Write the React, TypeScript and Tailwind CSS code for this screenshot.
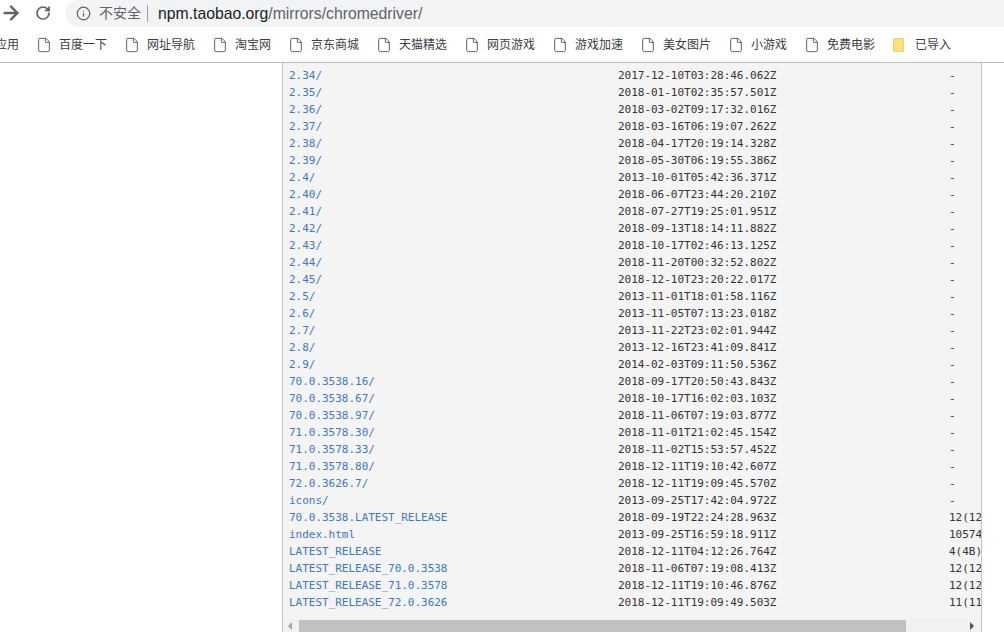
import { ArrowRight, RotateCw, Info, File } from 'lucide-react';

const bookmarks: [string, string][] = [
  ['百度一下', 'w-[88px]'],
  ['网址导航', 'w-[88px]'],
  ['淘宝网', 'w-[76px]'],
  ['京东商城', 'w-[88px]'],
  ['天猫精选', 'w-[88px]'],
  ['网页游戏', 'w-[88px]'],
  ['游戏加速', 'w-[88px]'],
  ['美女图片', 'w-[88px]'],
  ['小游戏', 'w-[76px]'],
  ['免费电影', 'w-[88px]'],
];

const rows = [
  ['2.34/', '2017-12-10T03:28:46.062Z', '-'],
  ['2.35/', '2018-01-10T02:35:57.501Z', '-'],
  ['2.36/', '2018-03-02T09:17:32.016Z', '-'],
  ['2.37/', '2018-03-16T06:19:07.262Z', '-'],
  ['2.38/', '2018-04-17T20:19:14.328Z', '-'],
  ['2.39/', '2018-05-30T06:19:55.386Z', '-'],
  ['2.4/', '2013-10-01T05:42:36.371Z', '-'],
  ['2.40/', '2018-06-07T23:44:20.210Z', '-'],
  ['2.41/', '2018-07-27T19:25:01.951Z', '-'],
  ['2.42/', '2018-09-13T18:14:11.882Z', '-'],
  ['2.43/', '2018-10-17T02:46:13.125Z', '-'],
  ['2.44/', '2018-11-20T00:32:52.802Z', '-'],
  ['2.45/', '2018-12-10T23:20:22.017Z', '-'],
  ['2.5/', '2013-11-01T18:01:58.116Z', '-'],
  ['2.6/', '2013-11-05T07:13:23.018Z', '-'],
  ['2.7/', '2013-11-22T23:02:01.944Z', '-'],
  ['2.8/', '2013-12-16T23:41:09.841Z', '-'],
  ['2.9/', '2014-02-03T09:11:50.536Z', '-'],
  ['70.0.3538.16/', '2018-09-17T20:50:43.843Z', '-'],
  ['70.0.3538.67/', '2018-10-17T16:02:03.103Z', '-'],
  ['70.0.3538.97/', '2018-11-06T07:19:03.877Z', '-'],
  ['71.0.3578.30/', '2018-11-01T21:02:45.154Z', '-'],
  ['71.0.3578.33/', '2018-11-02T15:53:57.452Z', '-'],
  ['71.0.3578.80/', '2018-12-11T19:10:42.607Z', '-'],
  ['72.0.3626.7/', '2018-12-11T19:09:45.570Z', '-'],
  ['icons/', '2013-09-25T17:42:04.972Z', '-'],
  ['70.0.3538.LATEST_RELEASE', '2018-09-19T22:24:28.963Z', '12(12'],
  ['index.html', '2013-09-25T16:59:18.911Z', '10574'],
  ['LATEST_RELEASE', '2018-12-11T04:12:26.764Z', '4(4B)'],
  ['LATEST_RELEASE_70.0.3538', '2018-11-06T07:19:08.413Z', '12(12'],
  ['LATEST_RELEASE_71.0.3578', '2018-12-11T19:10:46.876Z', '12(12'],
  ['LATEST_RELEASE_72.0.3626', '2018-12-11T19:09:49.503Z', '11(11'],
];

export default function App() {
  return (
    <div className="h-[632px] w-[1004px] overflow-hidden bg-white flex flex-col font-['Liberation_Sans','Noto_Sans_CJK_SC',sans-serif]">
      {/* Toolbar */}
      <div className="h-[27px] flex items-start shrink-0">
        <ArrowRight size={22} strokeWidth={2.6} className="mt-[2px] text-[#5f6368]" />
        <RotateCw size={16} strokeWidth={2.6} className="ml-[13px] mt-[5px] text-[#5f6368]" />
        <div className="ml-[14px] h-[27px] flex-1 rounded-l-[14px] bg-[#f1f3f4] flex items-center">
          <Info size={15} strokeWidth={2} className="ml-[11px] text-[#5f6368]" />
          <span className="ml-[8px] text-[#5f6368] text-[14px]">不安全</span>
          <span className="ml-[6px] h-[17px] w-px bg-[#9aa0a6]" />
          <span className="ml-[10px] text-[#202124] text-[15.75px]">npm.taobao.org</span>
          <span className="text-[#5f6368] text-[15.75px]">/mirrors/chromedriver/</span>
        </div>
      </div>

      {/* Bookmarks bar */}
      <div className="h-[36px] shrink-0 border-b border-[#bdbdbd] flex items-center text-[12px] text-[#3c4043]">
        <span className="w-[41px] -ml-[5px] shrink-0">应用</span>
        {bookmarks.map(([label, w]) => (
          <div key={label} className={`${w} shrink-0 flex items-center`}>
            <File size={16} strokeWidth={1.3} className="text-[#4a4d51] shrink-0" />
            <span className="ml-[7px] whitespace-nowrap">{label}</span>
          </div>
        ))}
        <div className="flex items-center ml-[1px]">
          <span className="h-[14px] w-[11px] rounded-[1px] bg-[#fbdf85] border border-[#f0cf6c]" />
          <span className="ml-[11px] whitespace-nowrap">已导入</span>
        </div>
      </div>

      {/* Page body */}
      <div className="flex-1 flex min-h-0">
        <div className="w-[282px] shrink-0" />
        <div className="w-[700px] shrink-0 border-x border-[#c4c4c4] bg-[#f4f4f4] flex flex-col overflow-hidden">
          <div className="flex-1 pt-[4px] font-['DejaVu_Sans_Mono',monospace] text-[11px] tracking-[-0.02px] leading-[17px] whitespace-nowrap">
            {rows.map(([name, date, size]) => (
              <div key={name} className="flex h-[17px]">
                <a className="w-[335px] pl-[6px] shrink-0 text-[#4078c0]">{name}</a>
                <span className="w-[331px] shrink-0 text-[#333333]">{date}</span>
                <span className="text-[#333333] overflow-hidden">{size}</span>
              </div>
            ))}
          </div>
          {/* Horizontal scrollbar */}
          <div className="h-[13px] shrink-0 bg-[#f1f1f1] flex items-center">
            <span className="ml-[5px] w-0 h-0 border-y-[4px] border-y-transparent border-r-[4px] border-r-[#a3a3a3]" />
            <div className="ml-[7px] w-[607px] h-[12px] mt-[1px] bg-[#c1c1c1]" />
            <span className="ml-auto mr-[7px] w-0 h-0 border-y-[4px] border-y-transparent border-l-[4px] border-l-[#505050]" />
          </div>
        </div>
      </div>
    </div>
  );
}
